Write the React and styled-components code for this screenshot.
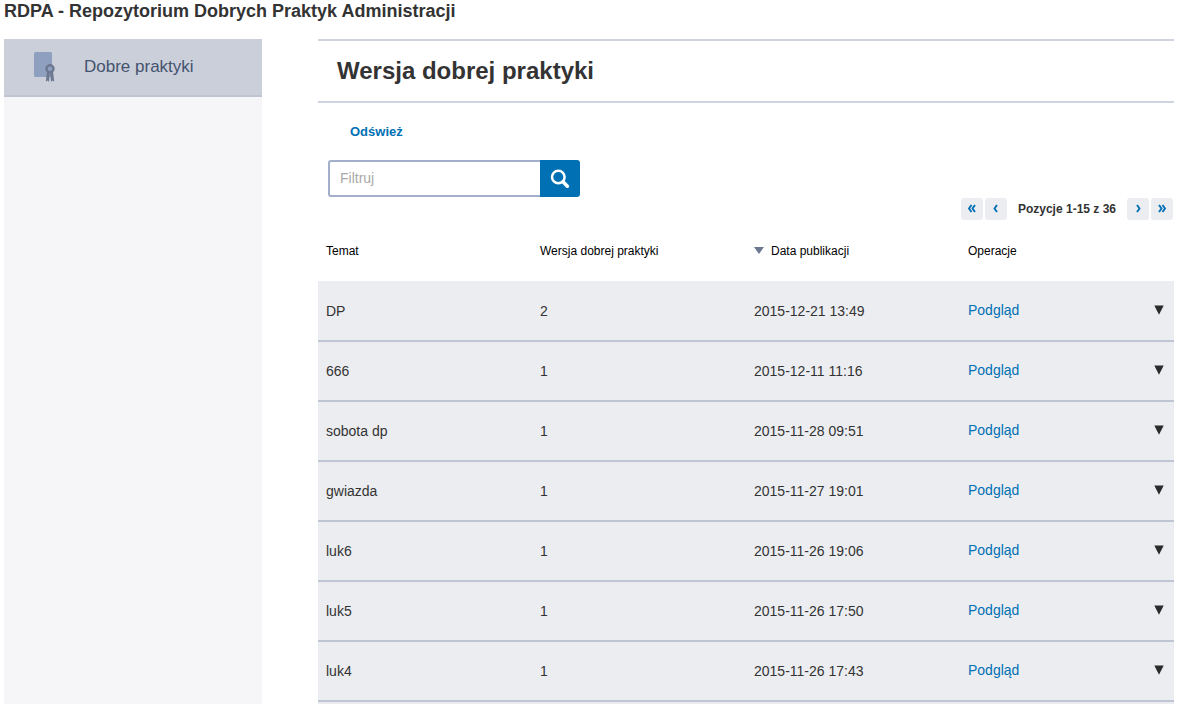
import React from 'react'
import styled, { createGlobalStyle } from 'styled-components'

const GlobalStyle = createGlobalStyle`
  * {
    box-sizing: border-box;
  }

  body {
    margin: 0;
    background-color: #fff;
    color: #333;
    font-family: "Liberation Sans", Arial, sans-serif;
    font-size: 14px;
  }
`

const Page = styled.div`
  display: flex;
  flex-direction: column;
  min-height: 100vh;
  padding: 0 16px 0 4px;
`

const SiteTitle = styled.h1`
  margin: 0 0 17px;
  font-size: 18px;
  line-height: 22px;
`

const Columns = styled.div`
  display: flex;
  flex: 1;
  gap: 56px;
`

const Sidebar = styled.nav`
  flex: 0 0 258px;
  background-color: #f6f6f8;
`

const SidebarLink = styled.a`
  display: flex;
  align-items: center;
  gap: 28px;
  height: 58px;
  padding: 0 28px;
  border-bottom: 2px solid #bfc5d3;
  background-color: #cbcfda;
  color: #44536e;
  font-size: 17px;
  line-height: 20px;
  text-decoration: none;
`

const Main = styled.main`
  display: flex;
  flex: 1;
  flex-direction: column;
  min-width: 0;
`

const Heading = styled.h2`
  margin: 0;
  padding: 16px 19px;
  border-top: 2px solid #cfd3e0;
  border-bottom: 2px solid #cfd3e0;
  font-size: 24px;
  line-height: 28px;
`

const Toolbar = styled.div`
  padding: 20px 32px;
  font-size: 13px;
  line-height: 17px;
`

const RefreshLink = styled.a`
  color: #0070b4;
  font-weight: bold;
  text-decoration: none;
`

const FilterForm = styled.form`
  display: flex;
  height: 37px;
  padding: 0 10px;
`

const FilterInput = styled.input`
  width: 212px;
  padding: 0 10px 2px;
  border: 2px solid #a3aeca;
  border-right: 0;
  border-radius: 3px 0 0 3px;
  background-color: #fff;
  color: #333;
  font: inherit;

  &::placeholder {
    color: #a9a9a9;
  }
`

const FilterButton = styled.button`
  display: flex;
  align-items: center;
  justify-content: center;
  width: 40px;
  padding: 0;
  border: 0;
  border-radius: 0 3px 3px 0;
  background-color: #0070b4;
  cursor: pointer;
`

const Pager = styled.div`
  display: flex;
  align-items: center;
  justify-content: flex-end;
  gap: 2px;
  padding: 1px 1px 0 0;
`

const PagerInfo = styled.span`
  padding: 0 9px;
  font-size: 12px;
  font-weight: bold;
  line-height: 16px;
`

const PagerButton = styled.button`
  display: flex;
  align-items: center;
  justify-content: center;
  width: 22px;
  height: 22px;
  padding: 0;
  border: 0;
  border-radius: 3px;
  background-color: #ecedf1;
  color: #0070b4;
  cursor: pointer;
`

const TableArea = styled.div`
  display: flex;
  flex: 1;
  flex-direction: column;
`

const Table = styled.table`
  width: 100%;
  border-spacing: 0;
  table-layout: fixed;
`

/* keeps the list background going under the last row */
const TableFill = styled.div`
  flex: 1;
  background-color: #ecedf1;
`

const HeaderCell = styled.th`
  height: 62px;
  padding: 0 8px;
  border-bottom: 1px solid #ecedf1;
  color: #000;
  font-size: 12px;
  font-weight: normal;
  text-align: left;
`

const SortArrow = styled.svg`
  margin-right: 7px;
`

const Cell = styled.td`
  height: 60px;
  padding: 0 8px;
  border-bottom: 2px solid #bfc5d3;
  background-color: #ecedf1;
`

const Actions = styled.div`
  display: flex;
  align-items: center;
  justify-content: space-between;
  padding-bottom: 2px;
`

const PreviewLink = styled.a`
  color: #0070b4;
  text-decoration: none;
`

const ExpandButton = styled.button`
  display: flex;
  padding: 0 2px;
  border: 0;
  background: none;
  cursor: pointer;
`

const rows = [
  { topic: 'DP', version: 2, date: '2015-12-21 13:49' },
  { topic: '666', version: 1, date: '2015-12-11 11:16' },
  { topic: 'sobota dp', version: 1, date: '2015-11-28 09:51' },
  { topic: 'gwiazda', version: 1, date: '2015-11-27 19:01' },
  { topic: 'luk6', version: 1, date: '2015-11-26 19:06' },
  { topic: 'luk5', version: 1, date: '2015-11-26 17:50' },
  { topic: 'luk4', version: 1, date: '2015-11-26 17:43' },
]

function CertificateIcon() {
  return (
    <svg width="24" height="32" viewBox="0 0 24 32" aria-hidden="true">
      <rect x="2" y="1" width="18" height="25" rx="1.5" fill="#8f9fbf" />
      <path d="M15 20.5 L17.8 21.5 L17 31 L15.9 29.4 L13.8 30.5 Z" fill="#6c7890" />
      <path d="M21 20.5 L18.2 21.5 L19 31 L20.1 29.4 L22.2 30.5 Z" fill="#6c7890" />
      <circle cx="18" cy="17.8" r="3.5" fill="#8f9fbf" stroke="#6c7890" strokeWidth="2.4" />
    </svg>
  )
}

function SearchIcon() {
  return (
    <svg width="20" height="20" viewBox="0 0 20 20" aria-hidden="true">
      <circle cx="8.3" cy="8" r="6.3" fill="none" stroke="#fff" strokeWidth="2.5" />
      <path d="M13 12.8 L17.4 17.2" stroke="#fff" strokeWidth="3.6" strokeLinecap="round" />
    </svg>
  )
}

function Chevrons({ double, right }) {
  const d = double ? 'M5.5 1 L3 4.5 L5.5 8 M9 1 L6.5 4.5 L9 8' : 'M7 1 L4.5 4.5 L7 8'
  return (
    <svg width="12" height="10" viewBox="0 0 12 10" aria-hidden="true">
      <path
        d={d}
        transform={right ? 'matrix(-1 0 0 1 12 0)' : undefined}
        fill="none"
        stroke="currentColor"
        strokeWidth="1.9"
      />
    </svg>
  )
}

export default function App() {
  return (
    <Page>
      <GlobalStyle />
      <SiteTitle>RDPA - Repozytorium Dobrych Praktyk Administracji</SiteTitle>

      <Columns>
        <Sidebar>
          <SidebarLink href="#praktyki">
            <CertificateIcon />
            Dobre praktyki
          </SidebarLink>
        </Sidebar>

        <Main>
          <Heading>Wersja dobrej praktyki</Heading>

          <Toolbar>
            <RefreshLink href="#odswiez">Odśwież</RefreshLink>
          </Toolbar>

          <FilterForm onSubmit={(e) => e.preventDefault()}>
            <FilterInput type="text" placeholder="Filtruj" aria-label="Filtruj" />
            <FilterButton type="submit" aria-label="Szukaj">
              <SearchIcon />
            </FilterButton>
          </FilterForm>

          <Pager>
            <PagerButton type="button" aria-label="Pierwsza strona"><Chevrons double /></PagerButton>
            <PagerButton type="button" aria-label="Poprzednia strona"><Chevrons /></PagerButton>
            <PagerInfo>Pozycje 1-15 z 36</PagerInfo>
            <PagerButton type="button" aria-label="Następna strona"><Chevrons right /></PagerButton>
            <PagerButton type="button" aria-label="Ostatnia strona"><Chevrons double right /></PagerButton>
          </Pager>

          <TableArea>
            <Table>
              <thead>
                <tr>
                  <HeaderCell scope="col">Temat</HeaderCell>
                  <HeaderCell scope="col">Wersja dobrej praktyki</HeaderCell>
                  <HeaderCell scope="col" aria-sort="descending">
                    <SortArrow width="10" height="8" viewBox="0 0 10 8" aria-hidden="true">
                      <path d="M0 0 H10 L5 7 Z" fill="#6c7890" />
                    </SortArrow>
                    Data publikacji
                  </HeaderCell>
                  <HeaderCell scope="col">Operacje</HeaderCell>
                </tr>
              </thead>
              <tbody>
                {rows.map((row) => (
                  <tr key={row.topic}>
                    <Cell>{row.topic}</Cell>
                    <Cell>{row.version}</Cell>
                    <Cell>{row.date}</Cell>
                    <Cell>
                      <Actions>
                        <PreviewLink href="#podglad">Podgląd</PreviewLink>
                        <ExpandButton type="button" aria-label="Rozwiń">
                          <svg width="10" height="10" viewBox="0 0 10 10" aria-hidden="true">
                            <path d="M0.3 0.5 H9.7 L5 9.8 Z" fill="#2b2b2b" />
                          </svg>
                        </ExpandButton>
                      </Actions>
                    </Cell>
                  </tr>
                ))}
              </tbody>
            </Table>
            <TableFill />
          </TableArea>
        </Main>
      </Columns>
    </Page>
  )
}
